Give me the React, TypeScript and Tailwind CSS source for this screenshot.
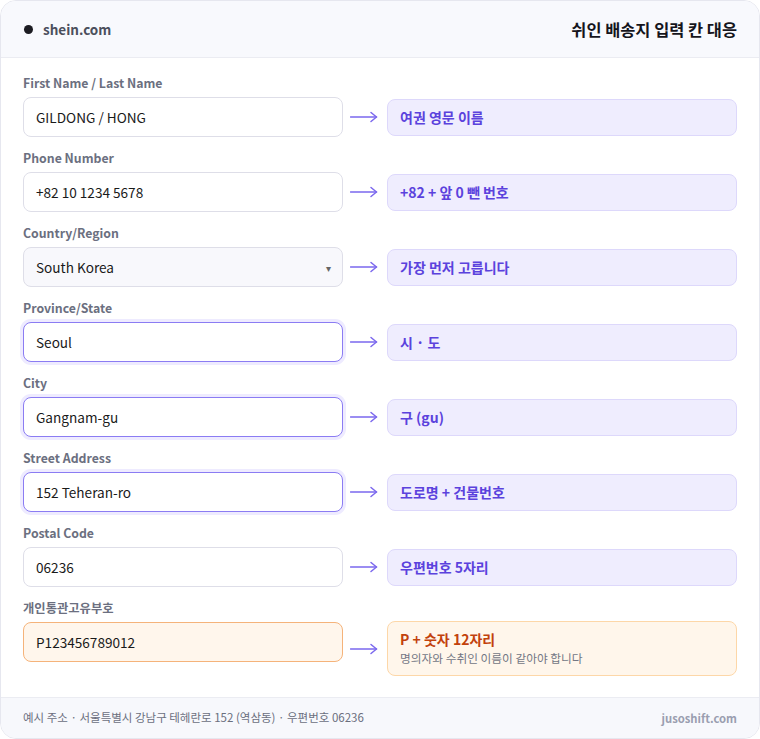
import React from "react";

type Row = {
  label: string;
  value: string;
  hint: string;
  kind?: "normal" | "focus" | "select";
};

const rows: Row[] = [
  { label: "First Name / Last Name", value: "GILDONG / HONG", hint: "여권 영문 이름" },
  { label: "Phone Number", value: "+82 10 1234 5678", hint: "+82 + 앞 0 뺀 번호" },
  { label: "Country/Region", value: "South Korea", hint: "가장 먼저 고릅니다", kind: "select" },
  { label: "Province/State", value: "Seoul", hint: "시 · 도", kind: "focus" },
  { label: "City", value: "Gangnam-gu", hint: "구 (gu)", kind: "focus" },
  { label: "Street Address", value: "152 Teheran-ro", hint: "도로명 + 건물번호", kind: "focus" },
  { label: "Postal Code", value: "06236", hint: "우편번호 5자리" },
];

function Arrow() {
  return (
    <svg width="28" height="12" viewBox="0 0 28 12" fill="none" className="shrink-0">
      <path d="M0.5 6H26.5" stroke="#7b68ee" strokeWidth="1.5" strokeLinecap="round" />
      <path d="M21 1.5L26.5 6L21 10.5" stroke="#7b68ee" strokeWidth="1.5" strokeLinecap="round" strokeLinejoin="round" />
    </svg>
  );
}

function Input({ value, kind }: { value: string; kind?: Row["kind"] }) {
  const base = "w-[320px] h-[40px] shrink-0 rounded-[8px] flex items-center pl-[12px] pr-[12px] text-[13.6px] text-[#1a1a1a]";
  if (kind === "focus") {
    return (
      <div className={base + " border-[1.5px] border-[#8b7cf3] bg-white shadow-[0_0_0_3px_#eeebff]"}>
        {value}
      </div>
    );
  }
  if (kind === "select") {
    return (
      <div className={base + " border border-[#dedee8] bg-[#f8f8fc] justify-between"}>
        <span>{value}</span>
        <span className="text-[10px] text-[#666] mr-[-1px]">▾</span>
      </div>
    );
  }
  return <div className={base + " border border-[#dedee8] bg-white"}>{value}</div>;
}

export default function App() {
  return (
    <div
      className="w-[760px] h-[739px] bg-white"
      style={{ fontFamily: '"Noto Sans CJK KR", "Noto Sans", sans-serif' }}
    >
      <div className="w-full h-full border border-[#e6e7ef] rounded-[16px] overflow-hidden flex flex-col">
        <div className="h-[57px] shrink-0 bg-[#f8f9fd] border-b border-[#ebecf2] flex items-center justify-between pl-[23px] pr-[22px]">
          <div className="flex items-center gap-[10px]">
            <span className="w-[9px] h-[9px] rounded-full bg-[#1c1c22]" />
            <span className="text-[13.5px] font-semibold text-[#4b4f5c]">shein.com</span>
          </div>
          <span className="text-[16.4px] font-bold text-[#15151c]">쉬인 배송지 입력 칸 대응</span>
        </div>

        <div className="flex-1 pt-[16px] pl-[22px] pr-[22px] flex flex-col">
          {rows.map((r) => (
            <div key={r.label} className="mb-[12px]">
              <div className="h-[18px] mb-[5px] text-[12.3px] font-semibold text-[#6b6f80] leading-[18px]">
                {r.label}
              </div>
              <div className="flex items-center">
                <Input value={r.value} kind={r.kind} />
                <div className="ml-[7px] mr-[9px]">
                  <Arrow />
                </div>
                <div className="flex-1 h-[37px] rounded-[8px] bg-[#efedfe] border border-[#ddd8fb] flex items-center pl-[12px] text-[14px] font-bold text-[#5b42dd]">
                  {r.hint}
                </div>
              </div>
            </div>
          ))}
          <div>
            <div className="h-[18px] mb-[5px] text-[12.3px] font-semibold text-[#6b6f80] leading-[18px]">
              개인통관고유부호
            </div>
            <div className="flex items-center">
              <div className="w-[320px] h-[40px] shrink-0 self-start rounded-[8px] flex items-center pl-[12px] text-[13.6px] text-[#1a1a1a] bg-[#fff6ec] border border-[#f5b37a]">
                P123456789012
              </div>
              <div className="ml-[7px] mr-[9px]">
                <Arrow />
              </div>
              <div className="flex-1 h-[55px] -mt-[1px] rounded-[8px] bg-[#fff6eb] border border-[#fdd7a8] flex flex-col pt-[7px] pl-[12px]">
                <span className="text-[14px] font-bold text-[#c2410c] leading-[20px]">P + 숫자 12자리</span>
                <span className="text-[11.7px] text-[#737684] leading-[17px]">명의자와 수취인 이름이 같아야 합니다</span>
              </div>
            </div>
          </div>
        </div>

        <div className="h-[41px] shrink-0 bg-[#f7f8fc] border-t border-[#ebecf2] flex items-center justify-between pl-[22px] pr-[22px]">
          <span className="text-[11.5px] text-[#6b6f7e]">예시 주소 · 서울특별시 강남구 테헤란로 152 (역삼동) · 우편번호 06236</span>
          <span className="text-[11.3px] font-semibold text-[#9a9eb0]">jusoshift.com</span>
        </div>
      </div>
    </div>
  );
}
